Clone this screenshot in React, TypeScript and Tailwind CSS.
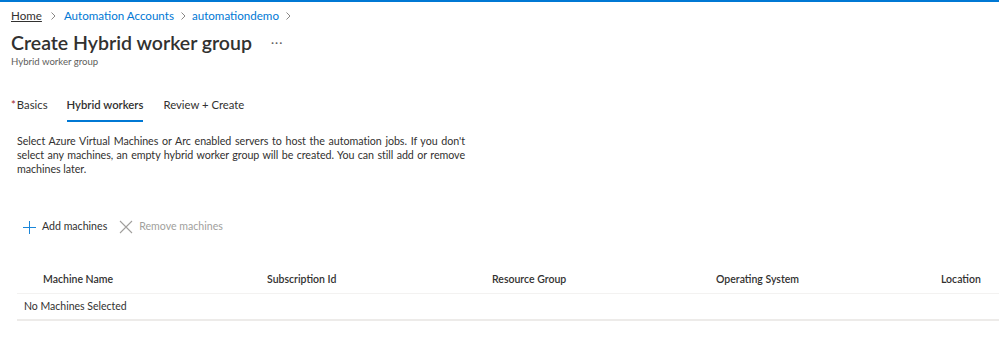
import React from "react";

const columns = ["Machine Name", "Subscription Id", "Resource Group", "Operating System", "Location"];

function Chevron() {
	return (
		<svg width="8" height="8" viewBox="0 0 8 8" className="mx-[5px]">
			<path d="M2.5 0.5 L6 4 L2.5 7.5" fill="none" stroke="#8a8886" strokeWidth="1" />
		</svg>
	);
}

export default function App() {
	return (
		<div
			className="w-[999px] h-[355px] overflow-hidden bg-white border-t-2 border-[#0078d4] text-[#323130]"
			style={{ fontFamily: 'Lato, "Noto Sans", sans-serif' }}
		>
			{/* breadcrumb */}
			<div className="flex items-center h-[28px] pl-[11px] text-[11.6px]">
				<span className="underline text-[#323130] mr-[2px]">Home</span>
				<Chevron />
				<span className="text-[#0078d4] ml-[2px]">Automation Accounts</span>
				<Chevron />
				<span className="text-[#0078d4]">automationdemo</span>
				<Chevron />
			</div>

			{/* title */}
			<div className="flex items-center pl-[11px] h-[26px]">
				<h1 className="text-[19.5px] font-semibold">Create Hybrid worker group</h1>
				<span className="ml-[19px] text-[#605e5c] text-[12px] tracking-[1px]">···</span>
			</div>
			<div className="pl-[11px] text-[9.6px] text-[#605e5c] leading-[12px]">Hybrid worker group</div>

			{/* tabs */}
			<div className="flex items-end pl-[11px] mt-[28px] text-[11.3px] h-[26px]">
				<div className="pb-[8px]">
					<span className="text-[#a4262c] mr-[1px]">*</span>Basics
				</div>
				<div className="ml-[19px] font-semibold border-b-2 border-[#0078d4] pb-[6px]">Hybrid workers</div>
				<div className="ml-[20px] pb-[8px]">Review + Create</div>
			</div>

			{/* description */}
			<p className="ml-[17px] mt-[12px] w-[448px] text-[10.7px] tracking-[-0.05px] leading-[14px] text-justify">
				Select Azure Virtual Machines or Arc enabled servers to host the automation jobs. If you don't select any
				machines, an empty hybrid worker group will be created. You can still add or remove machines later.
			</p>

			{/* toolbar */}
			<div className="flex items-center ml-[23px] mt-[41px] h-[20px] text-[10.6px]">
				<svg width="13" height="13" viewBox="0 0 13 13" shapeRendering="crispEdges">
					<path d="M6.5 0 V13 M0 6.5 H13" stroke="#1a86d9" strokeWidth="1" />
				</svg>
				<span className="ml-[6px]">Add machines</span>
				<svg width="14" height="14" viewBox="0 0 14 14" className="ml-[12px]">
					<path d="M1 1 L13 13 M13 1 L1 13" stroke="#a19f9d" strokeWidth="1.1" />
				</svg>
				<span className="ml-[6px] text-[#a19f9d]">Remove machines</span>
			</div>

			{/* table */}
			<div className="ml-[17px] mt-[29px] w-[1130px] text-[10.5px]">
				<div className="grid grid-cols-[250px_225px_224px_225px_206px] h-[28px] items-center border-b border-[#f3f2f1] font-semibold">
					{columns.map((c, i) => (
						<div key={c} className={i === 0 ? "pl-[26px]" : ""}>
							{c}
						</div>
					))}
				</div>
				<div className="flex items-center h-[26px] pl-[7px] mt-[1px] mb-[1px] border-b-2 border-[#edebe9]">
					No Machines Selected
				</div>
			</div>
		</div>
	);
}
